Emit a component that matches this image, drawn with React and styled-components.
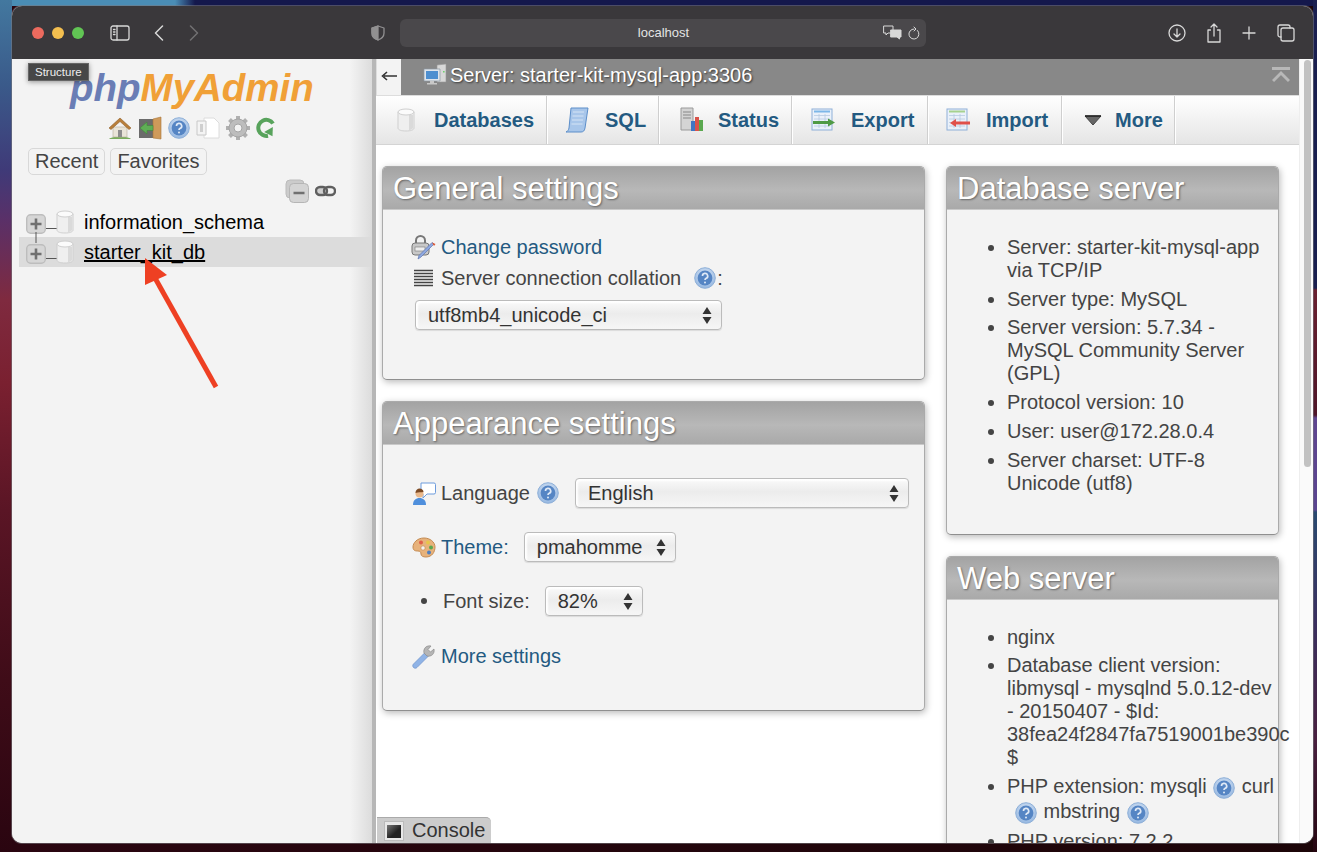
import React from "react";
import styled, { createGlobalStyle } from "styled-components";

const GlobalStyle = createGlobalStyle`
  html, body {
    margin: 0;
    padding: 0;
    background: #150408;
    font-family: "Liberation Sans", Arial, sans-serif;
  }
  * { box-sizing: border-box; }
`;

const Desktop = styled.div`
  position: relative;
  width: 1317px;
  height: 852px;
  padding: 6px 4px 9px 12px;
  overflow: hidden;
  background:
    linear-gradient(180deg, #43789f 0, #3a5a8a 85px, #3f3a78 170px, #5a3068 220px, #7f2a3f 300px, #7a2030 383px, #5a1525 510px, #3f0c18 680px, #2a0510 852px) left top / 12px 100% no-repeat,
    linear-gradient(180deg, #1a1f50 0, #1a1f50 288px, #6a2030 290px, #4f1528 415px, #5f4590 418px, #5a4590 510px, #2a4a70 512px, #3a3060 620px, #4a2040 740px, #25050f 852px) right top / 4px 100% no-repeat,
    linear-gradient(90deg, #4a8db5 0, #4a8db5 175px, #14184c 195px) left top / 100% 6px no-repeat,
    linear-gradient(90deg, #2a0510, #1c0508);
`;

const Window = styled.div`
  display: flex;
  flex-direction: column;
  height: 837px;
  border-radius: 10px;
  overflow: hidden;
  background: #f3f3f3;
  box-shadow: 0 0 0 1px rgba(120, 120, 125, 0.55);
`;

const TitleBar = styled.div`
  display: flex;
  align-items: center;
  height: 53px;
  flex: none;
  padding-left: 20px;
  background: #3a383b;
  color: #d8d8d8;
`;

const Light = styled.span`
  width: 12px;
  height: 12px;
  margin-right: 8px;
  border-radius: 50%;
  background: ${(p) => p.$color};
`;

const BarIcon = styled.svg`
  flex: none;
  margin-left: ${(p) => p.$left || 0}px;
  fill: none;
  stroke: currentColor;
  stroke-width: ${(p) => p.$stroke || 1.3};
  stroke-linecap: round;
  stroke-linejoin: round;
  opacity: ${(p) => p.$dim || 1};
`;

const AddressBar = styled.div`
  display: flex;
  align-items: center;
  width: 526px;
  height: 28px;
  margin-left: 15px;
  padding-right: 6px;
  border-radius: 6px;
  background: #4a484b;
`;

const Address = styled.span`
  flex: 1;
  padding-left: 44px;
  text-align: center;
  font-size: 13px;
  color: #e4e4e4;
`;

const Content = styled.div`
  display: flex;
  flex: 1;
  min-height: 0;
`;

const Sidebar = styled.aside`
  flex: none;
  width: 360px;
  padding-top: 7px;
  background: linear-gradient(90deg, #f3f3f3 0, #f3f3f3 338px, #dcdcdc 360px);
`;

const Logo = styled.div`
  height: 47px;
  padding-left: 58px;
  font-size: 38.5px;
  line-height: 44px;
  font-weight: bold;
  font-style: italic;
  white-space: nowrap;
  color: #f0a037;
  span { color: #6a7db5; }
`;

const QuickIcons = styled.div`
  display: flex;
  align-items: center;
  gap: 6px;
  height: 28px;
  padding-left: 96px;
  margin-top: 1px;
`;

const TabRow = styled.div`
  display: flex;
  gap: 5px;
  margin: 6px 0 0 16px;
`;

const TabButton = styled.div`
  height: 27px;
  padding: 0 6px;
  border: 1px solid #d8d8d8;
  border-radius: 5px;
  font-size: 20px;
  line-height: 25px;
  color: #444;
`;

const TreeTools = styled.div`
  display: flex;
  align-items: center;
  gap: 6px;
  height: 28px;
  margin: 2px 0;
  padding-left: 273px;
`;

const TreeRow = styled.div`
  display: flex;
  align-items: center;
  height: 30px;
  margin-left: 7px;
  padding-left: 7px;
  font-size: 20px;
  color: #000;
  background: ${(p) => (p.$selected ? "#dcdcdc" : "transparent")};
  text-decoration: ${(p) => (p.$selected ? "underline" : "none")};
`;

const TreeLabel = styled.span`
  margin-left: 10px;
`;

const ConnectorLine = styled.svg`
  flex: none;
  margin: 0 -7px 0 -20px;
`;

const PlusSvg = styled.svg`
  flex: none;
  margin-top: 3px;
`;

const Divider = styled.div`
  flex: none;
  width: 4px;
  background: #b7b7b7;
`;

const Main = styled.main`
  position: relative;
  display: flex;
  flex: 1;
  min-width: 0;
  background: #fff;
`;

const Page = styled.div`
  display: flex;
  flex-direction: column;
  flex: 1;
  min-width: 0;
  overflow: hidden;
`;

const ServerBar = styled.div`
  display: flex;
  align-items: center;
  flex: none;
  height: 36px;
  padding-bottom: 4px;
  background: #888;
  color: #fff;
  font-size: 20px;
  text-shadow: 1px 1px 2px #333;
`;

const BackButton = styled.div`
  display: flex;
  align-items: center;
  justify-content: center;
  width: 25px;
  height: 36px;
  margin: 0 22px -4px 0;
  padding-bottom: 3px;
  background: #f3f3f3;
  border-left: 1px solid #ddd;
`;

const ServerName = styled.span`
  flex: 1;
  margin-left: 3px;
`;

const CollapseBar = styled.svg`
  margin-right: 9px;
`;

const Nav = styled.nav`
  display: flex;
  flex: none;
  height: 50px;
  border-top: 1px solid #ddd;
  border-bottom: 1px solid #d4d4d4;
  background: linear-gradient(#ffffff, #e5e5e5);
`;

const NavItem = styled.div`
  display: flex;
  align-items: center;
  height: 100%;
  width: ${(p) => p.$width}px;
  padding-left: ${(p) => p.$pad || 18}px;
  border-right: 1px solid #fff;
  box-shadow: inset -1px 0 0 #cfcfcf;
  font-size: 20px;
  font-weight: bold;
  color: #235a81;
`;

const NavIcon = styled.span`
  display: flex;
  flex: none;
  width: ${(p) => p.$width || 40}px;
  padding-left: ${(p) => p.$offset || 0}px;
`;

const Columns = styled.div`
  display: flex;
  gap: 21px;
  padding: 21px 0 0 6px;
`;

const Column = styled.div`
  display: flex;
  flex-direction: column;
  gap: 21px;
  flex: none;
  width: ${(p) => p.$width}px;
`;

const Panel = styled.section`
  flex: none;
  border: 1px solid #aaa;
  border-bottom-color: #8f8f8f;
  border-radius: 5px;
  background: #f3f3f3;
  box-shadow: 1px 2px 7px rgba(0, 0, 0, 0.28);
`;

const PanelTitle = styled.h2`
  height: 43px;
  margin: 0;
  padding-left: 10px;
  border-bottom: 1px solid #c9c9c9;
  border-radius: 4px 4px 0 0;
  background: linear-gradient(#a3a3a3, #b8b8b8 55%, #a9a9a9);
  color: #fff;
  font-size: 31px;
  font-weight: normal;
  line-height: 44px;
  text-shadow: 1px 1px 2px #666;
`;

const PanelBody = styled.div`
  padding: ${(p) => p.$padding};
  font-size: 20px;
  color: #444;
`;

const Row = styled.div`
  display: flex;
  align-items: center;
  height: ${(p) => p.$height || 30}px;
  margin-bottom: ${(p) => p.$gap || 0}px;
  padding-left: ${(p) => p.$indent || 0}px;
`;

const RowIcon = styled.span`
  display: flex;
  justify-content: center;
  flex: none;
  width: 25px;
  margin-right: 5px;
`;

const Link = styled.a`
  color: #235a81;
`;

const Bullet = styled.span`
  flex: none;
  width: 6px;
  height: 6px;
  margin-right: 16px;
  border-radius: 50%;
  background: #444;
`;

const SelectBox = styled.div`
  display: flex;
  align-items: center;
  justify-content: space-between;
  flex: none;
  width: ${(p) => p.$width}px;
  height: 30px;
  margin-top: ${(p) => p.$top || 0}px;
  margin-left: ${(p) => p.$left || 0}px;
  padding: 0 9px 0 12px;
  border: 1px solid #bbb;
  border-radius: 4px;
  background: linear-gradient(#fafafa, #ececec 45%, #f6f6f6);
  box-shadow: inset 2px 2px 2px #fff, 0 1px 1px rgba(0, 0, 0, 0.1);
  color: #333;
  font-size: 20px;
`;

const InfoList = styled.ul`
  margin: 0;
  padding: 0 0 0 60px;
  font-size: 20px;
  line-height: 23px;
  color: #444;
`;

const InfoItem = styled.li`
  margin-bottom: ${(p) => p.$gap ?? 6}px;
`;

const ScrollTrack = styled.div`
  flex: none;
  width: 14px;
  padding: 1px 2px 0 4px;
  background: #fafafa;
  border-left: 1px solid #eee;
`;

const ScrollThumb = styled.div`
  height: 407px;
  border-radius: 4px;
  background: #c2c2c2;
`;

const ConsoleTab = styled.div`
  position: absolute;
  left: 1px;
  bottom: 0;
  display: flex;
  align-items: center;
  gap: 8px;
  width: 114px;
  height: 26px;
  padding-left: 7px;
  border-radius: 0 5px 0 0;
  border-top: 1px solid #aaa;
  background: #ccc;
  color: #333;
  font-size: 20px;
`;

const Tooltip = styled.div`
  position: absolute;
  left: 28px;
  top: 63px;
  width: 61px;
  height: 18px;
  padding-left: 6px;
  border: 1px solid #666;
  background: #474747;
  box-shadow: 0 1px 5px rgba(0, 0, 0, 0.4);
  color: #eee;
  font-size: 11.5px;
  line-height: 16px;
`;

const ArrowMark = styled.svg`
  position: absolute;
  left: 140px;
  top: 254px;
`;

const HelpIcon = ({ className }) => (
  <svg className={className} width="22" height="22" viewBox="0 0 22 22">
    <defs>
      <radialGradient id="helpRing" cx="50%" cy="35%" r="65%">
        <stop offset="0" stopColor="#dbe7f6" />
        <stop offset="1" stopColor="#94b6e0" />
      </radialGradient>
    </defs>
    <circle cx="11" cy="11" r="10.300" fill="url(#helpRing)" stroke="#8fb0d8" />
    <circle cx="11" cy="11" r="7.400" fill="#5585c4" />
    <path d="M8.500 9a2.600 2.600 0 1 1 3.800 2.300c-.8.5-1.300.8-1.300 1.700" fill="none" stroke="#dfe9f6" strokeWidth="1.700" />
    <circle cx="11" cy="15.400" r="1" fill="#dfe9f6" />
  </svg>
);

const LabelHelp = styled(HelpIcon)`
  flex: none;
  margin: ${(p) => p.$margin};
`;

const InlineHelp = styled(HelpIcon)`
  vertical-align: middle;
  margin: 2px 1px 1px ${(p) => p.$left || 1}px;
`;

const Cylinder = () => (
  <svg width="18" height="24" viewBox="0 0 18 24">
    <path d="M1 4v16c0 2 3.500 3 8 3s8-1 8-3V4z" fill="#efefef" stroke="#cfcfcf" />
    <path d="M12 7h4v13c-1 1.500-2.500 2-4 2.300z" fill="#dadada" />
    <ellipse cx="9" cy="4" rx="8" ry="3" fill="#fbfbfb" stroke="#cfcfcf" />
  </svg>
);

const PlusBox = () => (
  <PlusSvg width="20" height="20" viewBox="0 0 20 20">
    <rect x="0.700" y="0.700" width="18.600" height="18.600" rx="4" fill="#d6d6d6" stroke="#bdbdbd" strokeWidth="1.400" />
    <path d="M10 4.500v11M4.500 10h11" stroke="#707070" strokeWidth="2.600" />
  </PlusSvg>
);

const Connector = ({ top }) => (
  <ConnectorLine width="37" height="30" viewBox="0 0 37 30">
    <path d={`M10 ${top ? 0 : 25}V${top ? 6 : 30}M20 21.500h11`} stroke="#555" strokeWidth="1" fill="none" />
  </ConnectorLine>
);

const HomeIcon = () => (
  <svg width="24" height="24" viewBox="0 0 24 24">
    <path d="M1 23c2-3 20-3 22 0z" fill="#79ad5c" />
    <path d="M5 11h14v10H5z" fill="#e9e4d8" stroke="#b5ad9c" strokeWidth=".6" />
    <path d="M10 14h4v7h-4z" fill="#8c8c8c" />
    <path d="M1 12 12 2l11 10-2 1.500L12 5.500 3 13.500z" fill="#b97f3b" stroke="#8e5f2a" strokeWidth=".6" />
  </svg>
);

const ExitIcon = () => (
  <svg width="24" height="24" viewBox="0 0 24 24">
    <path d="M1 3h16v19H1z" fill="#6b6b6b" />
    <path d="M15 3l8-2v22l-8-1z" fill="#cf9a5a" stroke="#a87436" strokeWidth=".6" />
    <path d="M2 12l7-6v3.500h6v5H9V18z" fill="#5fae55" stroke="#3f8a3a" strokeWidth=".6" />
  </svg>
);

const DocsIcon = () => (
  <svg width="24" height="24" viewBox="0 0 24 24">
    <path d="M8 2h10l5 5v15H8z" fill="#fff" stroke="#dcdcdc" />
    <path d="M1 5h9v14H1z" fill="#f4f4f4" stroke="#c8c8c8" />
    <path d="M4 8h3v8H4z" fill="#cfcfcf" />
  </svg>
);

const GearIcon = () => (
  <svg width="24" height="24" viewBox="0 0 24 24">
    <path d="M12 0v24M0 12h24M3.500 3.500l17 17M20.500 3.500l-17 17" stroke="#b0b0b0" strokeWidth="4" />
    <circle cx="12" cy="12" r="9" fill="#bdbdbd" stroke="#a5a5a5" />
    <circle cx="12" cy="12" r="4" fill="#f3f3f3" stroke="#a5a5a5" />
  </svg>
);

const ReloadIcon = () => (
  <svg width="20" height="22" viewBox="0 0 20 22">
    <path d="M17 6.500A8 8 0 1 0 12 18.700" fill="none" stroke="#58a35c" strokeWidth="4" />
    <path d="M9 12h10l-5 8z" fill="#58a35c" transform="rotate(-30 14 15)" />
  </svg>
);

const CollapseAll = () => (
  <svg width="24" height="24" viewBox="0 0 24 24">
    <rect x="1" y="1" width="18" height="18" rx="4" fill="#cbcbcb" stroke="#bbb" />
    <rect x="4.500" y="4.500" width="19" height="19" rx="4" fill="#d4d4d4" stroke="#b5b5b5" />
    <path d="M8.500 14h11" stroke="#707070" strokeWidth="2.600" />
  </svg>
);

const ChainIcon = () => (
  <svg width="21" height="12" viewBox="0 0 21 12">
    <rect x="1" y="2" width="11" height="8" rx="4" fill="#cfcfcf" stroke="#5f5f5f" strokeWidth="2.400" />
    <rect x="9" y="2" width="11" height="8" rx="4" fill="none" stroke="#5f5f5f" strokeWidth="2.400" />
  </svg>
);

const ServerIcon = () => (
  <svg width="24" height="24" viewBox="0 0 24 24">
    <path d="M14 2l9-1v18h-9z" fill="#d8d8d8" stroke="#999" strokeWidth=".6" />
    <path d="M20 8h1.600v1.600H20z" fill="#6fcf6f" />
    <path d="M1 6h16v12H1z" fill="#dfe5ec" stroke="#8d98a5" strokeWidth=".7" />
    <path d="M3 8h12v8H3z" fill="#4e8fd0" />
    <path d="M7 18h4v2h3v1.500H4V20h3z" fill="#c8c8c8" />
  </svg>
);

const ScrollIcon = () => (
  <svg width="24" height="26" viewBox="0 0 24 26">
    <path d="M6 1h17l-3 20c-.5 3-2 4-4 4H1c2-1 2.500-2 3-4z" fill="#a8c6ea" stroke="#5c8ec9" />
    <path d="M8 5h11M7.500 9h11M7 13h11M6.500 17h11" stroke="#d5e4f5" strokeWidth="1" />
  </svg>
);

const StatusIcon = () => (
  <svg width="24" height="26" viewBox="0 0 24 26">
    <path d="M1 1h12v22H1z" fill="#d4d4d4" stroke="#9a9a9a" />
    <path d="M3 5h8M3 8h8M3 11h8" stroke="#888" />
    <path d="M11 14h4v10h-4z" fill="#3f76c4" />
    <path d="M15 10h4v14h-4z" fill="#d9534a" />
    <path d="M19 13h4v11h-4z" fill="#5aa84f" />
  </svg>
);

const TableArrow = ({ color, left }) => (
  <svg width="25" height="24" viewBox="0 0 25 24">
    <rect x="1" y="1" width="20" height="21" fill="#eaf1fa" stroke="#8fb0d8" />
    <path d="M3 3.500h16" stroke={left ? "#a6d28f" : "#7db7e8"} strokeWidth="2" />
    <path d="M3 7.500h16M3 11h16M3 14.500h16M3 18h16M8 6v14M14 6v14" stroke="#b8cbe2" strokeWidth=".8" />
    {left ? (
      <path d="M4 15l6-4v2.500h14v3H10V19z" fill={color} />
    ) : (
      <path d="M2 13h15v-2.500l7 4-7 4V16H2z" fill={color} />
    )}
  </svg>
);

const MoreIcon = () => (
  <svg width="18" height="11" viewBox="0 0 18 11">
    <path d="M1 1h16l-8 9z" fill="#666" stroke="#444" />
    <path d="M1 1h16" stroke="#222" strokeWidth="1.400" />
  </svg>
);

const PasswordIcon = () => (
  <svg width="25" height="26" viewBox="0 0 25 26">
    <rect x="1" y="8" width="17" height="12" rx="3" fill="#c8c8c8" stroke="#777" />
    <path d="M5 8V5.500a4.500 4.500 0 0 1 9 0V8" fill="none" stroke="#777" strokeWidth="2" />
    <rect x="4" y="12" width="10" height="4" fill="#eee" stroke="#777" strokeWidth=".6" />
    <path d="M23 9 10 22l-3 2 1-3.500L21 7.500z" fill="#8fa9e0" stroke="#5c74b0" strokeWidth=".7" />
    <path d="M21 7.500 24.500 9 23 11z" fill="#e0552e" />
  </svg>
);

const LinesIcon = () => (
  <svg width="19" height="19" viewBox="0 0 19 19">
    <path d="M0 1.500h19M0 4.500h19M0 7.500h19M0 10.500h19M0 13.500h19M0 16.500h19" stroke="#444" strokeWidth="1.500" />
  </svg>
);

const LanguageIcon = () => (
  <svg width="24" height="25" viewBox="0 0 24 25">
    <path d="M9 2h13a1.500 1.500 0 0 1 1.500 1.500v8A1.500 1.500 0 0 1 22 13h-7l-4 4v-4H9z" fill="#fff" stroke="#6d9bdc" />
    <path d="M1 24c0-5 3-7 6.500-7s6.500 2 6.500 7z" fill="#4f8fdc" />
    <circle cx="7.500" cy="12.500" r="4" fill="#eab88a" />
    <path d="M3.500 12c0-3 2-4.500 4-4.500s4 1.500 4 3.500c-3 .5-5 0-8 1z" fill="#7c4a24" />
  </svg>
);

const PaletteIcon = () => (
  <svg width="24" height="24" viewBox="0 0 24 24">
    <path d="M12 3C5 3 1 8 1 12s3 4 5 4 3 1 3 3 2 3 5 3c6 0 9-5 9-10S18 3 12 3z" fill="#e7b27b" stroke="#c48b52" />
    <circle cx="9" cy="7.500" r="2" fill="#e05f4a" />
    <circle cx="16" cy="7.500" r="2" fill="#e7c64a" />
    <circle cx="19" cy="12.500" r="2" fill="#5aa84f" />
    <circle cx="17" cy="17.500" r="2" fill="#4f7fbf" />
    <circle cx="11" cy="13" r="2.200" fill="#f3f3f3" stroke="#c48b52" strokeWidth=".7" />
  </svg>
);

const WrenchIcon = () => (
  <svg width="24" height="25" viewBox="0 0 24 25">
    <path d="M1.500 20 13 8.500l3.500 3.500L5 23.500c-1 1-2.500 1-3.500 0s-1-2.500 0-3.500z" fill="#8fb3e6" stroke="#6d92cc" strokeWidth=".7" />
    <path d="M12 9c-1-4 2-8 7-7l-3 3.500 2.500 2.500L22 5c1 5-3 8-7 7z" fill="#b5b5b5" stroke="#8a8a8a" strokeWidth=".7" />
  </svg>
);

const SelectArrows = () => (
  <svg width="10" height="17" viewBox="0 0 10 17">
    <path d="M5 0l4.500 7H.5zM5 17 .5 10h9z" fill="#333" />
  </svg>
);

const ConsoleIcon = () => (
  <svg width="20" height="20" viewBox="0 0 20 20">
    <defs>
      <linearGradient id="consoleScreen" x1="0" y1="0" x2="1" y2="1">
        <stop offset="0" stopColor="#777" />
        <stop offset="0.6" stopColor="#222" />
      </linearGradient>
    </defs>
    <rect x="0.500" y="0.500" width="19" height="19" fill="#e8e8e8" stroke="#bbb" />
    <rect x="3" y="4" width="14" height="13" fill="url(#consoleScreen)" />
  </svg>
);

const App = () => (
  <>
    <GlobalStyle />
    <Desktop>
      <Window>
        <TitleBar>
          <Light $color="#ec6a5e" />
          <Light $color="#f4bf4f" />
          <Light $color="#61c554" />
          <BarIcon $left={18} width="20" height="16" viewBox="0 0 20 16">
            <rect x="1" y="1" width="18" height="14" rx="2" />
            <path d="M7 1v14M3.500 4.500h1.500M3.500 7h1.500M3.500 9.500h1.500" />
          </BarIcon>
          <BarIcon $left={24} $stroke={1.5} width="10" height="16" viewBox="0 0 10 16">
            <path d="M8.500 1 1.500 8l7 7" />
          </BarIcon>
          <BarIcon $left={25} $stroke={1.5} $dim={0.35} width="10" height="16" viewBox="0 0 10 16">
            <path d="M1.500 1 8.500 8l-7 7" />
          </BarIcon>
          <BarIcon $left={172} $dim={0.55} width="14" height="16" viewBox="0 0 14 16">
            <path d="M7 1 1 3v5c0 3.500 3 6 6 7 3-1 6-3.500 6-7V3z" />
            <path d="M7 1 1 3v5c0 3.500 3 6 6 7z" fill="currentColor" />
          </BarIcon>
          <AddressBar>
            <Address>localhost</Address>
            <BarIcon $stroke={1} width="19" height="15" viewBox="0 0 19 15">
              <path d="M1 1h9v7H5l-2 2V8H1z" />
              <path d="M8 5h10v7h-1.500v2L14 12H8z" fill="currentColor" />
            </BarIcon>
            <BarIcon $left={6} $stroke={1} width="12" height="14" viewBox="0 0 12 14">
              <path d="M9.500 4.500a5 5 0 1 1-3.500-1.500M6 1l2 2-2 2" />
            </BarIcon>
          </AddressBar>
          <BarIcon $left={242} width="18" height="18" viewBox="0 0 18 18">
            <circle cx="9" cy="9" r="8" />
            <path d="M9 5v8M6 10l3 3 3-3" />
          </BarIcon>
          <BarIcon $left={20} width="16" height="20" viewBox="0 0 16 20">
            <path d="M4.500 7H2v12h12V7h-2.500M8 13V1M5 4l3-3 3 3" />
          </BarIcon>
          <BarIcon $left={20} width="14" height="14" viewBox="0 0 14 14">
            <path d="M7 1v12M1 7h12" />
          </BarIcon>
          <BarIcon $left={21} width="18" height="18" viewBox="0 0 18 18">
            <path d="M4 13H3a2 2 0 0 1-2-2V3a2 2 0 0 1 2-2h8a2 2 0 0 1 2 2v1" />
            <rect x="4" y="4" width="13" height="13" rx="2" />
          </BarIcon>
        </TitleBar>
        <Content>
          <Sidebar>
            <Logo>
              <span>php</span>MyAdmin
            </Logo>
            <QuickIcons>
              <HomeIcon />
              <ExitIcon />
              <HelpIcon />
              <DocsIcon />
              <GearIcon />
              <ReloadIcon />
            </QuickIcons>
            <TabRow>
              <TabButton>Recent</TabButton>
              <TabButton>Favorites</TabButton>
            </TabRow>
            <TreeTools>
              <CollapseAll />
              <ChainIcon />
            </TreeTools>
            <TreeRow>
              <PlusBox />
              <Connector />
              <Cylinder />
              <TreeLabel>information_schema</TreeLabel>
            </TreeRow>
            <TreeRow $selected>
              <PlusBox />
              <Connector top />
              <Cylinder />
              <TreeLabel>starter_kit_db</TreeLabel>
            </TreeRow>
          </Sidebar>
          <Divider />
          <Main>
            <Page>
              <ServerBar>
                <BackButton>
                  <svg width="16" height="10" viewBox="0 0 16 10">
                    <path d="M16 5H3M6 1 1.500 5 6 9" fill="none" stroke="#333" strokeWidth="1.600" />
                  </svg>
                </BackButton>
                <ServerIcon />
                <ServerName>Server: starter-kit-mysql-app:3306</ServerName>
                <CollapseBar width="18" height="16" viewBox="0 0 18 16">
                  <path d="M0 1.500h18M1 14l8-8 8 8" fill="none" stroke="#b8b8b8" strokeWidth="3" />
                </CollapseBar>
              </ServerBar>
              <Nav>
                <NavItem $width={172}>
                  <NavIcon $offset={3}><Cylinder /></NavIcon>
                  Databases
                </NavItem>
                <NavItem $width={112} $pad={17}>
                  <NavIcon><ScrollIcon /></NavIcon>
                  SQL
                </NavItem>
                <NavItem $width={133}>
                  <NavIcon $offset={2}><StatusIcon /></NavIcon>
                  Status
                </NavItem>
                <NavItem $width={136}>
                  <NavIcon><TableArrow color="#4f9a45" /></NavIcon>
                  Export
                </NavItem>
                <NavItem $width={134} $pad={17}>
                  <NavIcon><TableArrow color="#e0504a" left /></NavIcon>
                  Import
                </NavItem>
                <NavItem $width={113} $pad={21}>
                  <NavIcon $width={31}><MoreIcon /></NavIcon>
                  More
                </NavItem>
              </Nav>
              <Columns>
                <Column $width={543}>
                  <Panel>
                    <PanelTitle>General settings</PanelTitle>
                    <PanelBody $padding="22px 16px 49px 28px">
                      <Row $height={31}>
                        <RowIcon><PasswordIcon /></RowIcon>
                        <Link>Change password</Link>
                      </Row>
                      <Row>
                        <RowIcon><LinesIcon /></RowIcon>
                        Server connection collation
                        <LabelHelp $margin="0 1px 0 13px" />:
                      </Row>
                      <SelectBox $width={307} $left={4} $top={7}>
                        utf8mb4_unicode_ci
                        <SelectArrows />
                      </SelectBox>
                    </PanelBody>
                  </Panel>
                  <Panel>
                    <PanelTitle>Appearance settings</PanelTitle>
                    <PanelBody $padding="33px 16px 39px 28px">
                      <Row $gap={24}>
                        <RowIcon><LanguageIcon /></RowIcon>
                        Language
                        <LabelHelp $margin="0 0 0 7px" />
                        <SelectBox $width={334} $left={16}>
                          English
                          <SelectArrows />
                        </SelectBox>
                      </Row>
                      <Row $gap={24}>
                        <RowIcon><PaletteIcon /></RowIcon>
                        <Link>Theme:</Link>
                        <SelectBox $width={152} $left={15}>
                          pmahomme
                          <SelectArrows />
                        </SelectBox>
                      </Row>
                      <Row $gap={25} $indent={10}>
                        <Bullet />
                        Font size:
                        <SelectBox $width={98} $left={15}>
                          82%
                          <SelectArrows />
                        </SelectBox>
                      </Row>
                      <Row>
                        <RowIcon><WrenchIcon /></RowIcon>
                        <Link>More settings</Link>
                      </Row>
                    </PanelBody>
                  </Panel>
                </Column>
                <Column $width={333}>
                  <Panel>
                    <PanelTitle>Database server</PanelTitle>
                    <PanelBody $padding="26px 0 33px 0">
                      <InfoList>
                        <InfoItem>Server: starter-kit-mysql-app via TCP/IP</InfoItem>
                        <InfoItem $gap={5}>Server type: MySQL</InfoItem>
                        <InfoItem>Server version: 5.7.34 - MySQL Community Server (GPL)</InfoItem>
                        <InfoItem>Protocol version: 10</InfoItem>
                        <InfoItem>User: user@172.28.0.4</InfoItem>
                        <InfoItem>Server charset: UTF-8 Unicode (utf8)</InfoItem>
                      </InfoList>
                    </PanelBody>
                  </Panel>
                  <Panel>
                    <PanelTitle>Web server</PanelTitle>
                    <PanelBody $padding="26px 0 35px 0">
                      <InfoList>
                        <InfoItem $gap={5}>nginx</InfoItem>
                        <InfoItem>
                          Database client version: libmysql - mysqlnd 5.0.12-dev - 20150407 - $Id: 38fea24f2847fa7519001be390c $
                        </InfoItem>
                        <InfoItem $gap={5}>
                          PHP extension: mysqli <InlineHelp /> curl <InlineHelp $left={8} /> mbstring <InlineHelp />
                        </InfoItem>
                        <InfoItem>PHP version: 7.2.2</InfoItem>
                      </InfoList>
                    </PanelBody>
                  </Panel>
                </Column>
              </Columns>
            </Page>
            <ScrollTrack>
              <ScrollThumb />
            </ScrollTrack>
            <ConsoleTab>
              <ConsoleIcon />
              Console
            </ConsoleTab>
          </Main>
        </Content>
      </Window>
      <Tooltip>Structure</Tooltip>
      <ArrowMark width="82" height="140" viewBox="0 0 82 140">
        <path d="M5 4 27 21 5 31z" fill="#ee4023" />
        <path d="M15 24 76 133" stroke="#ee4023" strokeWidth="5" />
      </ArrowMark>
    </Desktop>
  </>
);

export default App;
